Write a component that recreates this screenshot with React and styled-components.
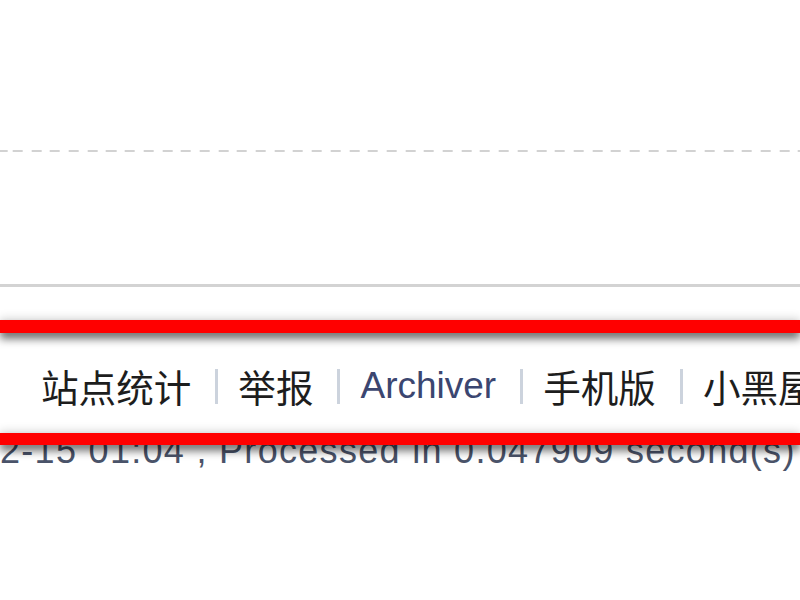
import React from 'react'
import styled, { createGlobalStyle } from 'styled-components'

const Global = createGlobalStyle`
  html, body {
    margin: 0;
    padding: 0;
    background: #fff;
    overflow: hidden;
  }
`

const Page = styled.div`
  width: 800px;
  height: 600px;
  overflow: hidden;
  display: flex;
  flex-direction: column;
  font-family: "Liberation Sans", "Noto Sans CJK SC", sans-serif;
`

const DashedRule = styled.div`
  margin-top: 150px;
  height: 2px;
  background-image: repeating-linear-gradient(
    90deg,
    #cdcdcd 0 10px,
    transparent 10px 18.7px
  );
  background-position: 12.7px 0;
  opacity: 0.9;
`

const SolidRule = styled.div`
  margin-top: 132px;
  height: 3px;
  background: #d3d3d3;
`

const Highlight = styled.div`
  position: relative;
  z-index: 1;
  margin-top: ${p => p.$top || 0}px;
  height: ${p => p.$h}px;
  background: #ff0000;
  box-shadow: 0 6px 9px rgba(0, 0, 0, 0.55), 0 -3px 8px rgba(0, 0, 0, 0.12);
`

const Nav = styled.nav`
  height: 100px;
  display: flex;
  align-items: center;
  padding: 6px 0 0 41px;
  box-sizing: border-box;
  white-space: nowrap;
  overflow: hidden;
`

const NavLink = styled.a`
  flex: none;
  font-family: ${p =>
    p.$latin
      ? '"Liberation Sans", sans-serif'
      : '"Noto Sans CJK SC", sans-serif'};
  font-size: ${p => (p.$latin ? 37 : 37.6)}px;
  line-height: 40px;
  color: ${p => (p.$latin ? '#3b4670' : '#1d1d1d')};
  text-decoration: none;
`

const Pipe = styled.span`
  flex: none;
  width: 3px;
  height: 35px;
  margin: 0 20px 0 24px;
  background: #ccd3dd;
`

const Footer = styled.p`
  margin: -12px 0 0 0;
  font-size: 36px;
  line-height: 36px;
  letter-spacing: 1.3px;
  color: #4a5369;
  white-space: nowrap;
`

const links = [
  { label: '站点统计' },
  { label: '举报' },
  { label: 'Archiver', latin: true },
  { label: '手机版' },
  { label: '小黑屋' },
]

export default function App() {
  return (
    <Page>
      <Global />
      <DashedRule />
      <SolidRule />
      <Highlight $top={33} $h={13} />
      <Nav>
        {links.map((l, i) => (
          <React.Fragment key={l.label}>
            {i > 0 && <Pipe />}
            <NavLink href="#" $latin={l.latin}>
              {l.label}
            </NavLink>
          </React.Fragment>
        ))}
      </Nav>
      <Highlight $h={12} />
      <Footer>2-15 01:04 , Processed in 0.047909 second(s)</Footer>
    </Page>
  )
}
